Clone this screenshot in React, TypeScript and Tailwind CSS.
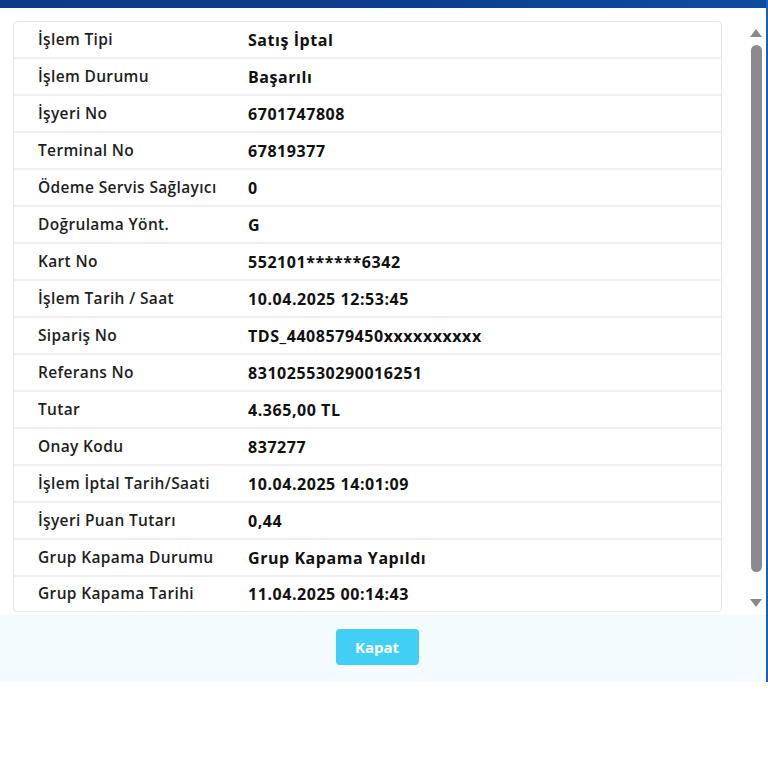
import React from "react";

const rows: [string, string][] = [
  ["İşlem Tipi", "Satış İptal"],
  ["İşlem Durumu", "Başarılı"],
  ["İşyeri No", "6701747808"],
  ["Terminal No", "67819377"],
  ["Ödeme Servis Sağlayıcı", "0"],
  ["Doğrulama Yönt.", "G"],
  ["Kart No", "552101******6342"],
  ["İşlem Tarih / Saat", "10.04.2025 12:53:45"],
  ["Sipariş No", "TDS_4408579450xxxxxxxxxx"],
  ["Referans No", "831025530290016251"],
  ["Tutar", "4.365,00 TL"],
  ["Onay Kodu", "837277"],
  ["İşlem İptal Tarih/Saati", "10.04.2025 14:01:09"],
  ["İşyeri Puan Tutarı", "0,44"],
  ["Grup Kapama Durumu", "Grup Kapama Yapıldı"],
  ["Grup Kapama Tarihi", "11.04.2025 00:14:43"],
];

const Scrollbar = () => (
  <div className="w-[20px] flex flex-col items-center pt-[21px] pb-[8px]">
    <svg width="12" height="8" viewBox="0 0 12 8">
      <path d="M6 0 L12 8 L0 8 Z" fill="#8a8a8a" />
    </svg>
    <div className="mt-[8px] w-[11px] h-[527px] rounded-full bg-[#8c8a8c]" />
    <div className="flex-1" />
    <svg width="12" height="8" viewBox="0 0 12 8">
      <path d="M0 0 L12 0 L6 8 Z" fill="#8a8a8a" />
    </svg>
  </div>
);

export default function App() {
  return (
    <div className="w-[768px] h-[768px] bg-white" style={{ fontFamily: '"Open Sans", "Noto Sans", sans-serif' }}>
      <div className="w-full border-r-2 border-[#1c5fb8]">
        <div className="h-[8px] bg-gradient-to-r from-[#0b3a88] via-[#0a3d8e] to-[#0e4c9f]" />
        <div className="flex h-[607px]">
          <div className="flex-1 pl-[13px] pr-[24px] pt-[13px]">
            <div className="border border-[#e6e8ea] rounded-[4px] bg-white">
              {rows.map(([label, value], i) => (
                <div
                  key={label}
                  className={
                    "flex items-center pl-[24px] " +
                    (i < rows.length - 1 ? "h-[37px] border-b-2 border-[#eef0f2]" : "h-[34px]")
                  }
                >
                  <div className="w-[210px] text-[15.5px] font-semibold text-[#1e1e1e] tracking-[0.35px]">{label}</div>
                  <div className="text-[16px] font-bold text-[#111] tracking-[0.55px]">{value}</div>
                </div>
              ))}
            </div>
          </div>
          <Scrollbar />
        </div>
        <div className="h-[67px] bg-[#f3fbfe] flex justify-center pt-[14px] pr-[12px]">
          <button className="w-[83px] h-[36px] rounded-[4px] bg-[#41cff5] text-white text-[15px] font-bold">
            Kapat
          </button>
        </div>
      </div>
    </div>
  );
}
